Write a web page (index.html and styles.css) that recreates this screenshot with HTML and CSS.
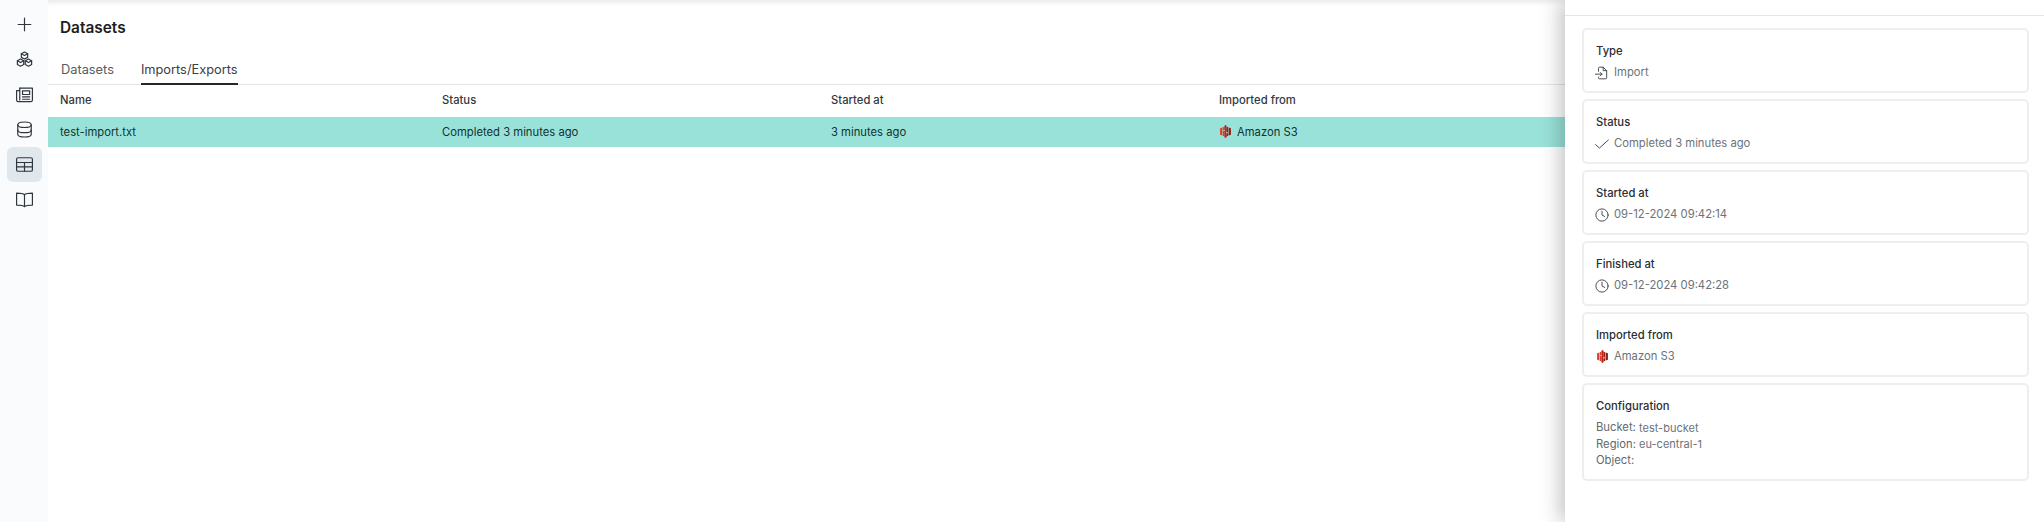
FILE: index.html
```html
<!DOCTYPE html>
<html lang="en">

<head>
    <meta charset="UTF-8">
    <meta name="viewport" content="width=device-width, initial-scale=1.0">
    <title>Datasets</title>
    <link rel="stylesheet" href="styles.css">
</head>

<body>
    <div class="app">
        <!-- Sidebar -->
        <nav class="sidebar">
            <a class="side-btn">
                <svg class="side-icon" viewBox="0 0 24 24"><path d="M12 4v16M4 12h16"/></svg>
            </a>
            <a class="side-btn">
                <svg class="side-icon" viewBox="0 0 24 24"><path d="M12 2.500l4 2.200v4.600l-4 2.200-4-2.200V4.700zM7 11.500l4 2.200v4.600l-4 2.200-4-2.200v-4.600zM17 11.500l4 2.200v4.600l-4 2.200-4-2.200v-4.600z"/><path d="M8 4.700l4 2.200 4-2.200M3 13.700l4 2.200 4-2.200M13 13.700l4 2.200 4-2.200"/></svg>
            </a>
            <a class="side-btn">
                <svg class="side-icon" viewBox="0 0 24 24"><path d="M6 4h16v15a2 2 0 0 1-2 2H4a2 2 0 0 1-2-2V7h4"/><path d="M6 4v15"/><path d="M9.500 7.500h9v4.500h-9zM9.500 15h9M9.500 18h9"/></svg>
            </a>
            <a class="side-btn">
                <svg class="side-icon" viewBox="0 0 24 24"><ellipse cx="12" cy="6" rx="8.500" ry="3.500"/><path d="M3.500 6v12c0 1.900 3.800 3.500 8.500 3.500s8.500-1.600 8.500-3.500V6"/><path d="M3.500 12.500c0 1.900 3.800 3.500 8.500 3.500s8.500-1.600 8.500-3.500"/></svg>
            </a>
            <a class="side-btn active">
                <svg class="side-icon" viewBox="0 0 24 24"><rect x="2" y="3.500" width="20" height="17" rx="2"/><path d="M2 9.500h20M2 15h20M12 9.500v11"/></svg>
            </a>
            <a class="side-btn">
                <svg class="side-icon" viewBox="0 0 24 24"><path d="M12 6C10.500 4.500 8 4 2 4v15c6 0 8.500.5 10 2 1.500-1.500 4-2 10-2V4c-6 0-8.500.5-10 2zM12 6v15"/></svg>
            </a>
        </nav>

        <main class="content">
            <h1 class="page-title">Datasets</h1>

            <div class="tabs">
                <span class="tab">Datasets</span>
                <span class="tab tab-active">Imports/Exports</span>
            </div>

            <div class="table-row table-head">
                <div>Name</div>
                <div>Status</div>
                <div>Started at</div>
                <div>Imported from</div>
            </div>
            <div class="table-row row-selected">
                <div>test-import.txt</div>
                <div>Completed 3 minutes ago</div>
                <div>3 minutes ago</div>
                <div class="with-icon">
                    <svg class="s3-icon" viewBox="0 0 24 24"><use href="#s3"/></svg>
                    Amazon S3
                </div>
            </div>
        </main>

        <!-- Панель деталей -->
        <aside class="details">
            <div class="details-top"></div>
            <div class="cards">
                <section class="card">
                    <h3>Type</h3>
                    <p class="card-value">
                        <svg class="value-icon" viewBox="0 0 24 24"><path d="M14 2v6h6"/><path d="M6 9V4a2 2 0 0 1 2-2h6l6 6v12a2 2 0 0 1-2 2H8a2 2 0 0 1-2-2v-1"/><path d="M0 14h12M9 11l3 3-3 3"/></svg>
                        Import
                    </p>
                </section>
                <section class="card">
                    <h3>Status</h3>
                    <p class="card-value">
                        <svg class="value-icon" viewBox="0 0 24 24"><path d="M1 13l6.500 6L23 5"/></svg>
                        Completed 3 minutes ago
                    </p>
                </section>
                <section class="card">
                    <h3>Started at</h3>
                    <p class="card-value">
                        <svg class="value-icon" viewBox="0 0 24 24"><circle cx="12" cy="12" r="10.500"/><path d="M12 5.500V12l4.500 2.500"/></svg>
                        09-12-2024 09:42:14
                    </p>
                </section>
                <section class="card">
                    <h3>Finished at</h3>
                    <p class="card-value">
                        <svg class="value-icon" viewBox="0 0 24 24"><circle cx="12" cy="12" r="10.500"/><path d="M12 5.500V12l4.500 2.500"/></svg>
                        09-12-2024 09:42:28
                    </p>
                </section>
                <section class="card">
                    <h3>Imported from</h3>
                    <p class="card-value tight">
                        <svg class="s3-icon" viewBox="0 0 24 24"><use href="#s3"/></svg>
                        Amazon S3
                    </p>
                </section>
                <section class="card">
                    <h3>Configuration</h3>
                    <div class="config">
                        <div>Bucket: <span class="bucket">test-bucket</span></div>
                        <div>Region: <span>eu-central-1</span></div>
                        <div>Object:</div>
                    </div>
                </section>
            </div>
        </aside>
    </div>

    <svg class="sprite" aria-hidden="true">
        <symbol id="s3" viewBox="0 0 24 24">
            <path fill="#d9402f" d="M2 6l4-1.500v15L2 18zM7 4l3-1v18l-3-1z"/>
            <path fill="#8f1f15" d="M22 6l-4-1.500v15l4-1.500zM17 4l-3-1v18l3-1z"/>
            <path fill="#b8281c" d="M10 1.500L12 0l2 1.500v21L12 24l-2-1.500z"/>
            <path fill="#f0c8c2" d="M8 9h2.500v2H8zM13.500 13H16v2h-2.500z"/>
        </symbol>
    </svg>
</body>

</html>
```

FILE: styles.css
```css
* {
    box-sizing: border-box;
}

html,
body {
    margin: 0;
    height: 100%;
    overflow: hidden;
}

body {
    font-family: Inter, "Noto Sans", sans-serif;
    font-size: 11.250px;
    color: #1f2328;
    background: #fff;
}

.app {
    position: relative;
    display: flex;
    height: 522px;
    overflow: hidden;
}

.sprite {
    display: none;
}

/* Sidebar */

.sidebar {
    width: 48px;
    flex-shrink: 0;
    display: flex;
    flex-direction: column;
    align-items: center;
    padding-top: 7px;
    background: #f9fbfd;
}

.side-btn {
    width: 35px;
    height: 35px;
    display: flex;
    align-items: center;
    justify-content: center;
    border-radius: 6px;
}

.side-btn.active {
    background: #e0e7ed;
}

.side-icon {
    width: 19px;
    height: 19px;
    fill: none;
    stroke: #30363c;
    stroke-width: 1.500;
    stroke-linejoin: round;
    stroke-linecap: round;
}

/* Main */

.content {
    flex: 1;
    min-width: 0;
    border-top: 1px solid #eee;
    box-shadow: inset 0 5px 5px -3px #ececec;
}

.page-title {
    margin: 0;
    padding: 18px 0 0 12px;
    height: 55px;
    font-size: 15.400px;
    line-height: 17px;
    font-weight: 600;
    color: #1b1d20;
}

.tabs {
    display: flex;
    gap: 27px;
    height: 29px;
    padding-left: 13px;
    border-bottom: 1px solid #e4e6e8;
}

.tab {
    height: 29px;
    padding-top: 5px;
    font-size: 12.800px;
    line-height: 17px;
    color: #555c63;
}

.tab-active {
    color: #3a4047;
    border-bottom: 2px solid #24282d;
}

.table-row {
    display: grid;
    grid-template-columns: 382px 389px 388px 1fr;
    align-items: center;
    padding-left: 12px;
}

.table-row>div {
    white-space: nowrap;
}

.table-head {
    height: 32px;
    padding-bottom: 2px;
    font-weight: 500;
    color: #33383d;
}

.row-selected {
    height: 30px;
    padding-bottom: 1px;
    background: #99e2d9;
    color: #12332f;
}

.with-icon {
    display: flex;
    align-items: center;
    gap: 5px;
}

.s3-icon {
    width: 13px;
    height: 13px;
    flex-shrink: 0;
}

/* Панель деталей */

.details {
    position: absolute;
    top: 0;
    right: 0;
    bottom: 0;
    width: 479px;
    background: #fff;
    box-shadow: -6px 0 18px rgba(0, 0, 0, 0.22);
}

.details-top {
    height: 16px;
    border-bottom: 1px solid #e4e6e8;
}

.cards {
    display: flex;
    flex-direction: column;
    gap: 6px;
    padding: 12px 15px 0 17px;
}

.card {
    height: 65px;
    padding: 14px 12px 0;
    border: 2px solid #eceef0;
    border-radius: 5px;
}

.card:last-child {
    height: 98px;
}

.card h3 {
    margin: 0;
    font-size: 11.250px;
    line-height: 15px;
    font-weight: 500;
    color: #2a2e33;
}

.card-value {
    display: flex;
    align-items: center;
    gap: 5px;
    margin: 6px 0 0;
    line-height: 15px;
    color: #6c7277;
}

.value-icon {
    width: 14px;
    height: 14px;
    margin-left: -1px;
    flex-shrink: 0;
    fill: none;
    stroke: #3d4247;
    stroke-width: 1.600;
    stroke-linejoin: round;
    stroke-linecap: round;
}

.config {
    margin-top: 5px;
    line-height: 16.500px;
    color: #62686e;
}

.config span {
    font-size: 11px;
    color: #6c7277;
}

.config .bucket {
    position: relative;
    top: 1px;
}
```
